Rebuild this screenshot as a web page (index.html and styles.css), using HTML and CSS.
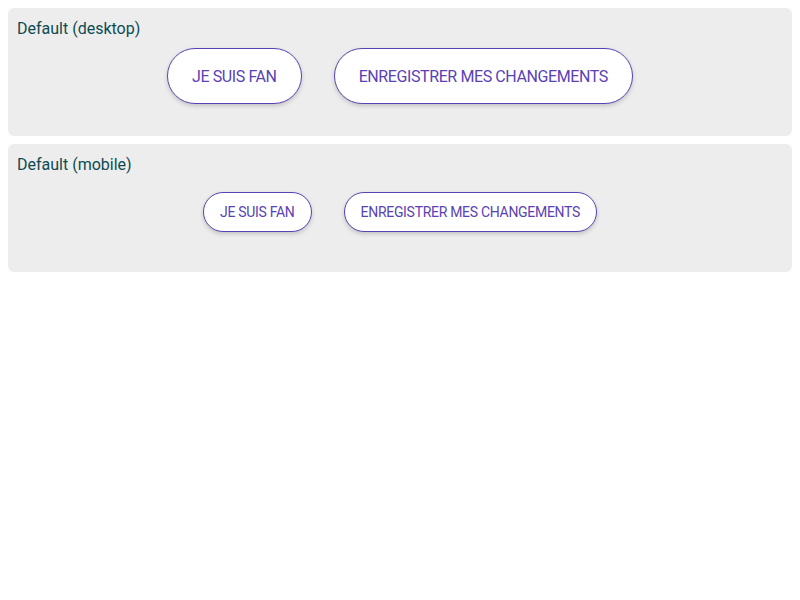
FILE: index.html
```html
<!DOCTYPE html>
<html lang="fr">
<head>
<meta charset="utf-8">
<title>Buttons</title>
<link rel="stylesheet" href="styles.css">
</head>
<body>
  <section class="panel">
    <h2 class="panel-title">Default (desktop)</h2>
    <div class="row row-desktop">
      <button class="btn btn-lg">JE SUIS FAN</button>
      <button class="btn btn-lg">ENREGISTRER MES CHANGEMENTS</button>
    </div>
  </section>
  <section class="panel">
    <h2 class="panel-title">Default (mobile)</h2>
    <div class="row row-mobile">
      <button class="btn btn-sm">JE SUIS FAN</button>
      <button class="btn btn-sm">ENREGISTRER MES CHANGEMENTS</button>
    </div>
  </section>
</body>
</html>
```

FILE: styles.css
```css
* { box-sizing: border-box; }
html, body { margin: 0; padding: 0; background: #fff; }
body {
  padding: 8px;
  font-family: Roboto, "Liberation Sans", sans-serif;
  display: flex;
  flex-direction: column;
  gap: 8px;
}
.panel {
  background: #ededed;
  border-radius: 6px;
  padding: 9px 9px 24px;
}
.panel-title {
  margin: 0;
  font-size: 16px;
  font-weight: 400;
  line-height: 24px;
  color: #0e4b52;
}
.row {
  margin-top: 7px;
  height: 56px;
  display: flex;
  align-items: center;
  justify-content: center;
  gap: 32px;
  margin-bottom: 8px;
}
.btn {
  font-family: inherit;
  background: #fff;
  color: #5a42b4;
  border: 1px solid #5a42b4;
  border-radius: 999px;
  box-shadow: 0 2px 4px rgba(0, 0, 0, 0.18);
  cursor: pointer;
  white-space: nowrap;
}
.btn-lg {
  height: 56px;
  padding: 0 24px;
  font-size: 16px;
  letter-spacing: -0.4px;
}
.btn-sm {
  height: 40px;
  padding: 0 16px;
  font-size: 14px;
  letter-spacing: -0.3px;
}
```
